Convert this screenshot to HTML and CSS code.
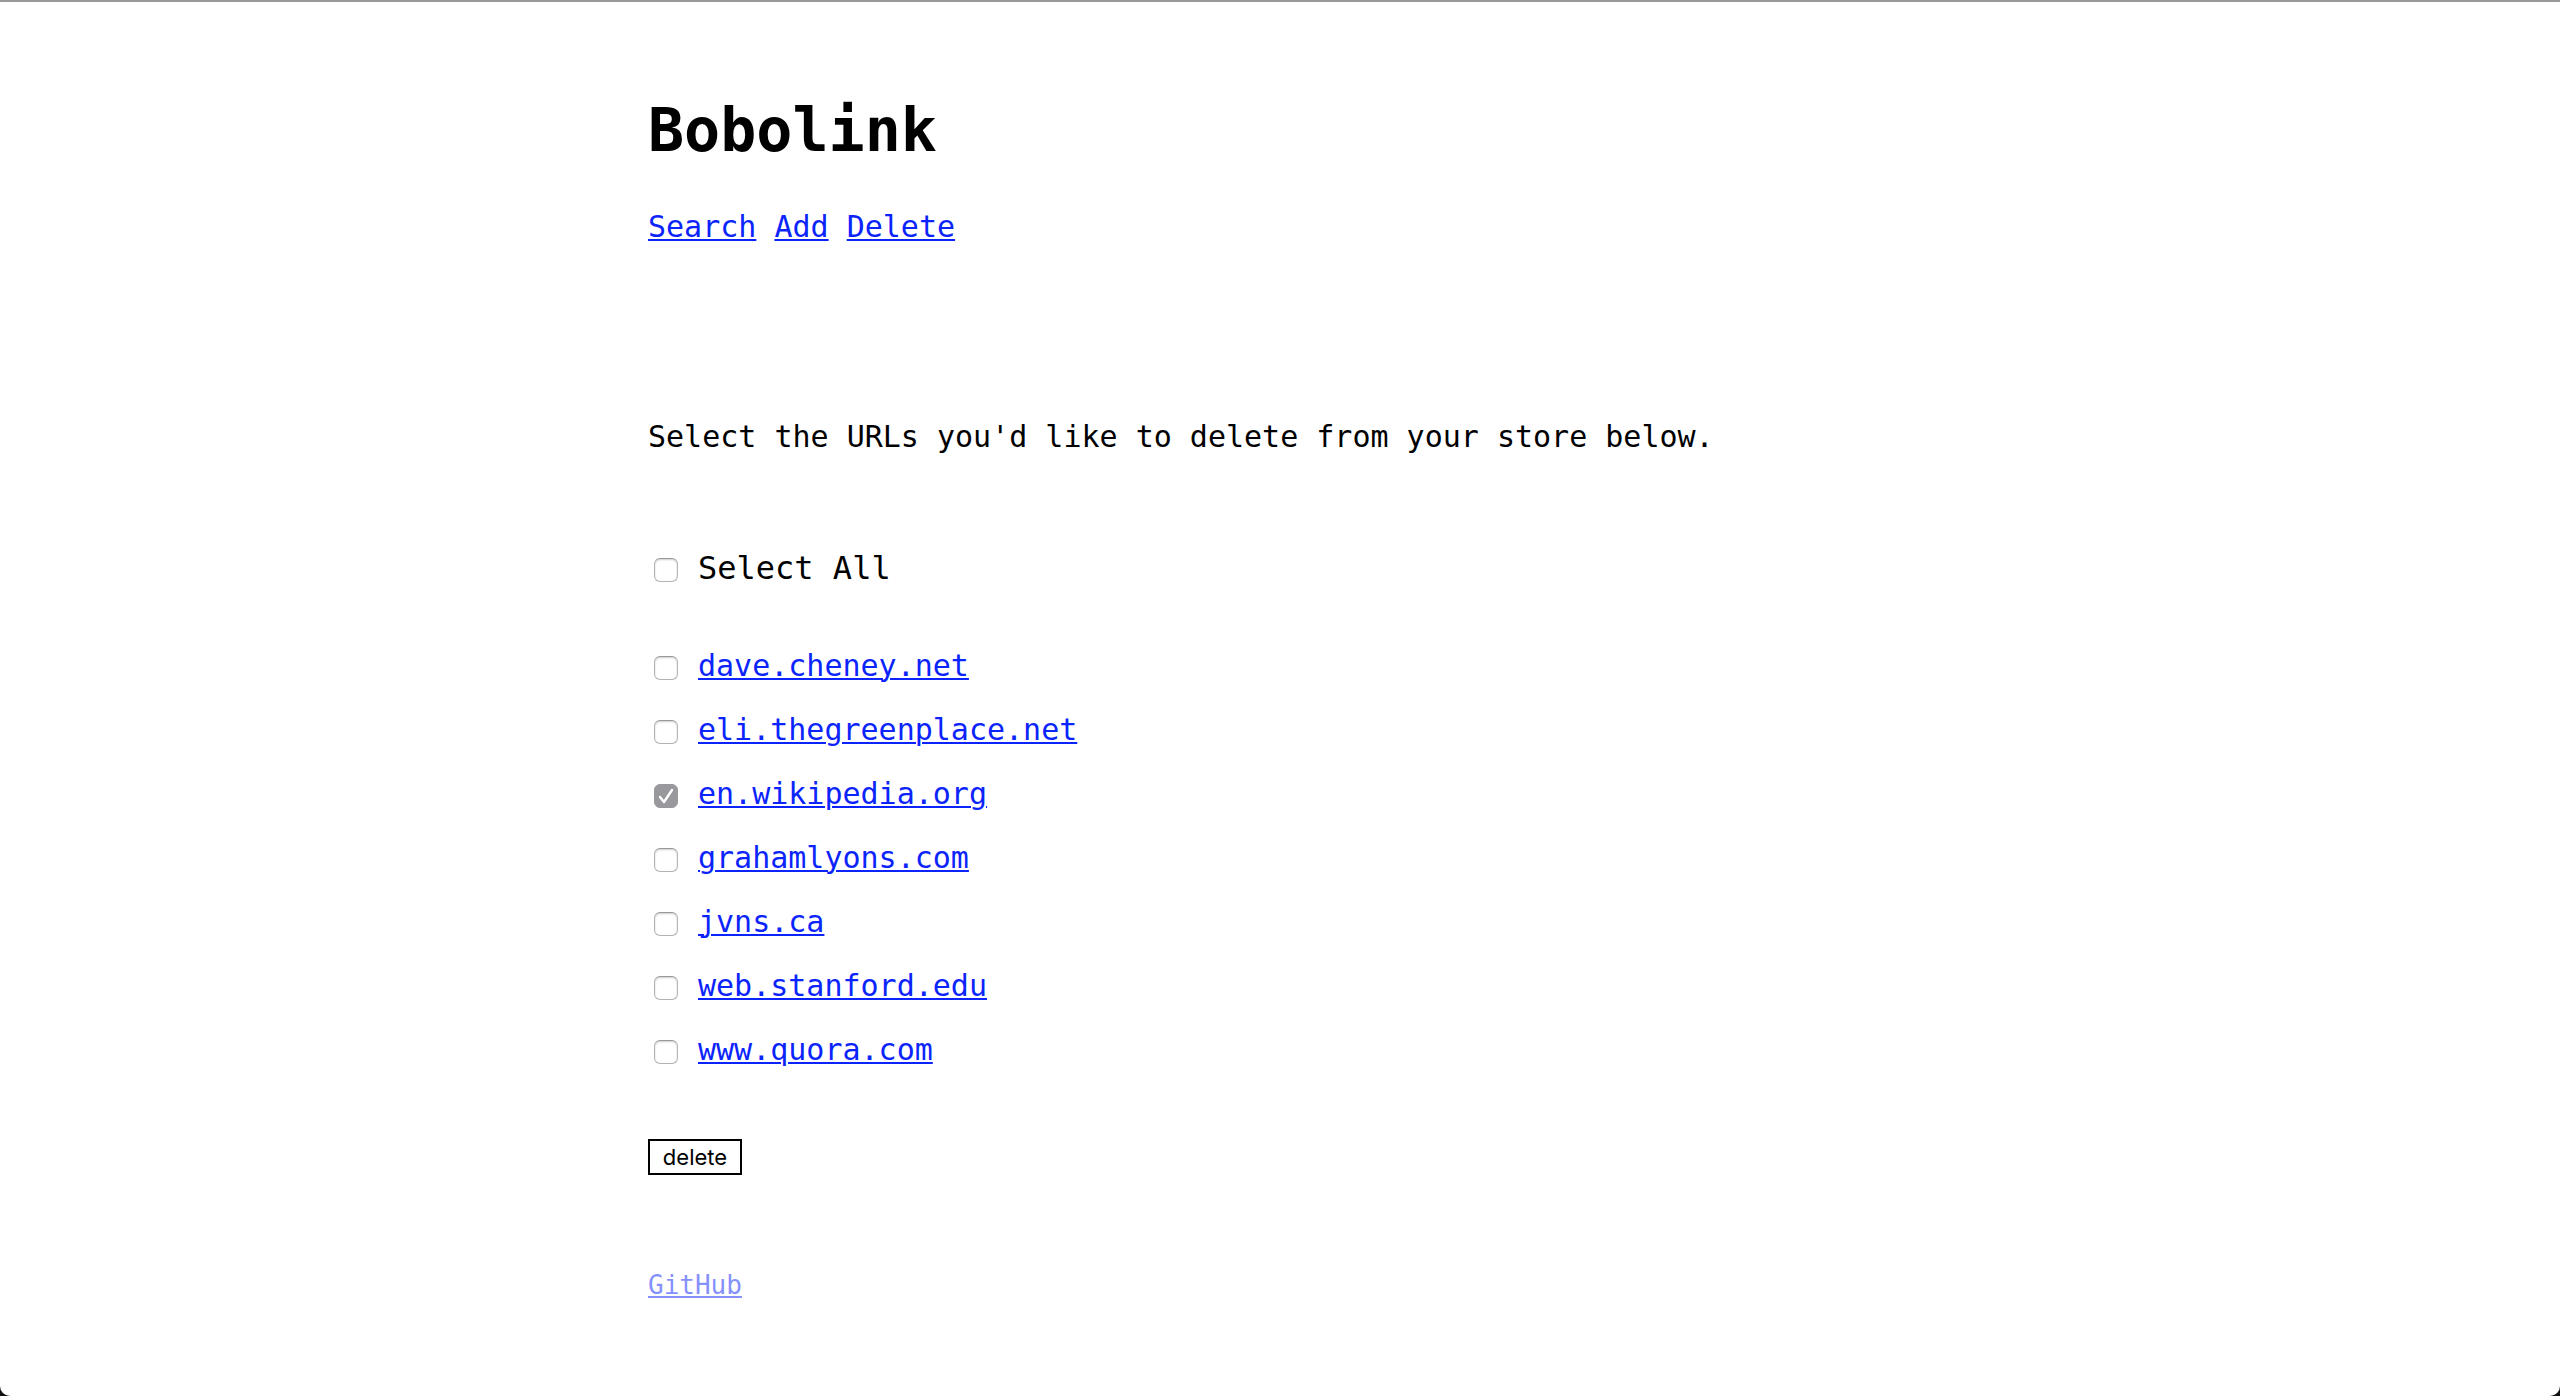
FILE: index.html
```html
<!DOCTYPE html>
<html lang="en">
<head>
<meta charset="utf-8">
<title>Bobolink</title>
<link rel="stylesheet" href="styles.css">
</head>
<body>
<div class="page">
  <header>
    <h1 class="title">Bobolink</h1>
    <nav class="nav"><a href="#search">Search</a> <a href="#add">Add</a> <a href="#delete">Delete</a></nav>
  </header>
  <main>
    <p class="intro">Select the URLs you'd like to delete from your store below.</p>
    <form>
      <div class="row row-all"><input class="tick" type="checkbox" id="all"><label for="all">Select All</label></div>
      <ul class="urls">
        <li class="row"><input class="tick" type="checkbox" aria-labelledby="u1"><a id="u1" href="#dave">dave.cheney.net</a></li>
        <li class="row"><input class="tick" type="checkbox" aria-labelledby="u2"><a id="u2" href="#eli">eli.thegreenplace.net</a></li>
        <li class="row"><input class="tick" type="checkbox" aria-labelledby="u3" checked><a id="u3" href="#wikipedia">en.wikipedia.org</a></li>
        <li class="row"><input class="tick" type="checkbox" aria-labelledby="u4"><a id="u4" href="#graham">grahamlyons.com</a></li>
        <li class="row"><input class="tick" type="checkbox" aria-labelledby="u5"><a id="u5" href="#jvns">jvns.ca</a></li>
        <li class="row"><input class="tick" type="checkbox" aria-labelledby="u6"><a id="u6" href="#stanford">web.stanford.edu</a></li>
        <li class="row"><input class="tick" type="checkbox" aria-labelledby="u7"><a id="u7" href="#quora">www.quora.com</a></li>
      </ul>
      <button class="delete" type="button">delete</button>
    </form>
  </main>
  <footer class="footer"><a href="#github">GitHub</a></footer>
</div>
</body>
</html>
```
FILE: styles.css
```css
* { box-sizing: border-box; }
html { background: #111; }
body {
  margin: 0;
  min-height: 100vh;
  background: #fff;
  border-top: 2px solid #999;
  border-radius: 0 0 10px 10px;
  color: #000;
  font: 30px/40px "DejaVu Sans Mono", monospace;
}
.page { width: 50%; max-width: 1264px; margin: 0 auto; padding-top: 88px; }
a { color: #0b24fb; text-decoration-thickness: 2px; text-underline-offset: 2px; }
.title { margin: 0; font-size: 60px; line-height: 80px; }
.nav { margin-top: 37px; }
.intro { margin: 170px 0 0; }
.row { display: flex; align-items: center; gap: 20px; height: 64px; }
.row-all { margin-top: 79px; font-size: 32px; }
.urls { list-style: none; margin: 34px 0 0; padding: 0; }
.tick {
  appearance: none;
  width: 24px;
  height: 24px;
  margin: 4px 0 0 6px;
  border: 1px solid #b4b4b4;
  border-top-color: #999;
  border-radius: 6px;
  box-shadow: inset 0 1px 2px #ccc;
}
.tick:checked {
  border-color: #98989d;
  background: #98989d url("data:image/svg+xml,%3Csvg xmlns='http://www.w3.org/2000/svg' viewBox='0 0 22 22'%3E%3Cpath d='M5 12l4 5 8-12' fill='none' stroke='white' stroke-width='2.4' stroke-linecap='round' stroke-linejoin='round'/%3E%3C/svg%3E") center / 22px no-repeat;
  box-shadow: none;
}
.delete { display: block; margin-top: 57px; width: 94px; height: 36px; padding: 0; border: 2px solid #000; background: #fff; color: #000; font: 22px "Inter", sans-serif; }
.footer { margin-top: 90px; font-size: 26px; opacity: .5; }
```
